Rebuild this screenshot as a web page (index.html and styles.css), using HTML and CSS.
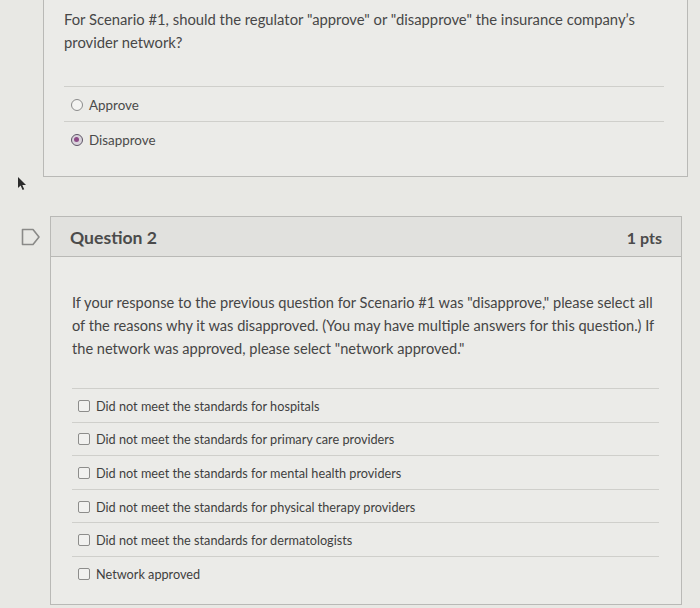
FILE: index.html
```html
<!DOCTYPE html>
<html lang="en">
<head>
<meta charset="utf-8">
<title>Quiz</title>
<link rel="stylesheet" href="styles.css">
</head>
<body>
<div class="page">
  <section class="card card-prev">
    <p class="q-text">For Scenario #1, should the regulator "approve" or "disapprove" the insurance company’s provider network?</p>
    <div class="answers">
      <label class="answer radio-answer"><span class="radio"></span><span>Approve</span></label>
      <label class="answer radio-answer"><span class="radio checked"></span><span>Disapprove</span></label>
    </div>
  </section>

  <div class="cursor-row">
    <svg class="cursor" width="10" height="14" viewBox="0 0 10 14"><path d="M1 0 L1 11 L3.6 8.6 L5.6 13 L7.2 12.3 L5.3 8 L9 8 Z" fill="#2b2b2b"/></svg>
  </div>

  <div class="q2-wrap">
    <svg class="flag" width="20" height="18" viewBox="0 0 20 18"><path d="M1.5 1.5 H12 L18 9 L12 16.5 H1.5 Z" fill="none" stroke="#8a8a88" stroke-width="1.6" stroke-linejoin="round"/></svg>
    <section class="card card-q2">
      <header class="q-header">
        <h2 class="q-title">Question 2</h2>
        <span class="q-pts">1 pts</span>
      </header>
      <div class="q-body">
        <p class="q-text2">If your response to the previous question for Scenario #1 was "disapprove," please select all of the reasons why it was disapproved. (You may have multiple answers for this question.) If the network was approved, please select "network approved."</p>
        <div class="answers checks">
          <label class="answer check-answer"><span class="box"></span><span>Did not meet the standards for hospitals</span></label>
          <label class="answer check-answer"><span class="box"></span><span>Did not meet the standards for primary care providers</span></label>
          <label class="answer check-answer"><span class="box"></span><span>Did not meet the standards for mental health providers</span></label>
          <label class="answer check-answer"><span class="box"></span><span>Did not meet the standards for physical therapy providers</span></label>
          <label class="answer check-answer"><span class="box"></span><span>Did not meet the standards for dermatologists</span></label>
          <label class="answer check-answer"><span class="box"></span><span>Network approved</span></label>
        </div>
      </div>
    </section>
  </div>
</div>
</body>
</html>
```

FILE: styles.css
```css
html, body {
  margin: 0;
  padding: 0;
  background: #e8e8e4;
  font-family: Lato, "Liberation Sans", sans-serif;
  color: #454545;
}

.page {
  width: 700px;
  height: 608px;
  overflow: hidden;
}

.card {
  background: #ebebe8;
  border: 1px solid #b9b9b6;
  box-sizing: border-box;
}

.card-prev {
  margin-left: 43px;
  width: 645px;
  border-top: none;
  height: 177px;
  padding: 8px 23px 0 20px;
}

.q-text {
  margin: 0;
  font-size: 14.8px;
  line-height: 23px;
  color: #474747;
}

.answers {
  margin-top: 32px;
}

.answer {
  display: flex;
  align-items: center;
  border-top: 1px solid #cfcfcb;
}

.radio-answer {
  height: 35px;
  padding-left: 7px;
  padding-top: 2px;
  box-sizing: border-box;
  font-size: 13.4px;
  gap: 6px;
  color: #4a4a4a;
}

.radio {
  width: 12px;
  height: 12px;
  border-radius: 50%;
  border: 1px solid #8b8b8b;
  box-sizing: border-box;
  background: #f4f4f2;
  position: relative;
}

.radio.checked {
  border: 1.5px solid #5d5566;
  background: #d9d3db;
}

.radio.checked::after {
  content: "";
  position: absolute;
  left: 2px;
  top: 2px;
  width: 5px;
  height: 5px;
  border-radius: 50%;
  background: #8c4a86;
}

.cursor-row {
  height: 39px;
  position: relative;
}

.cursor {
  position: absolute;
  left: 17px;
  top: 0;
}

.q2-wrap {
  position: relative;
}

.flag {
  position: absolute;
  left: 21px;
  top: 12px;
}

.card-q2 {
  margin-left: 50px;
  width: 632px;
  height: 389px;
}

.q-header {
  height: 40px;
  background: #e1e1de;
  border-bottom: 1px solid #b9b9b6;
  display: flex;
  align-items: center;
  justify-content: space-between;
  padding: 2px 19px 0 19px;
  box-sizing: border-box;
}

.q-title {
  margin: 0;
  font-size: 17.6px;
  font-weight: 700;
  color: #4b4b4b;
}

.q-pts {
  font-size: 16px;
  font-weight: 700;
  color: #4b4b4b;
}

.q-body {
  padding: 34px 22px 0 21px;
}

.q-text2 {
  margin: 0;
  font-size: 14.6px;
  line-height: 23px;
  color: #454545;
}

.checks {
  margin-top: 28px;
}

.check-answer {
  height: 33.6px;
  padding-left: 6px;
  padding-top: 1px;
  box-sizing: border-box;
  font-size: 12.7px;
  gap: 6px;
  color: #3f3f3f;
}

.box {
  width: 12px;
  height: 12px;
  border: 1.5px solid #8d8d8b;
  border-radius: 2px;
  box-sizing: border-box;
  background: #f1f1ef;
}
```
